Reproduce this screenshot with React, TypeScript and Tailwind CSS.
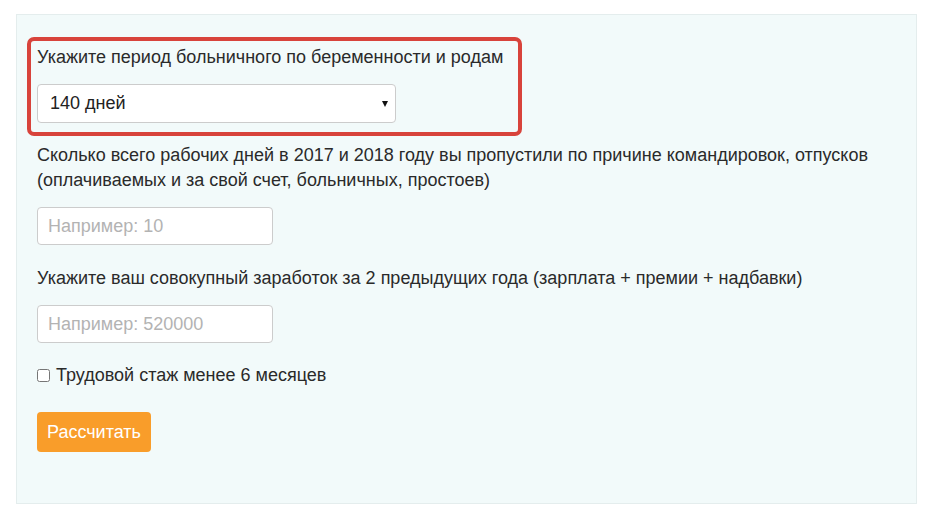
import { useState } from 'react'

export default function App() {
  const [period, setPeriod] = useState('140')
  const [days, setDays] = useState('')
  const [income, setIncome] = useState('')
  const [shortTenure, setShortTenure] = useState(false)

  return (
    <div className="min-h-[522px] bg-white pt-[14px] pl-[16px] font-['Liberation_Sans',Arial,sans-serif] text-[18px] text-[#2a2a2a]">
      <div className="w-[901px] h-[490px] border border-[#e4eded] bg-[#f2fafa] pt-[22px] px-[20px]">
        {/* highlighted block */}
        <div className="-ml-[10px] w-[495px] rounded-[7px] border-[4px] border-[#d8433b] pt-[5px] pb-[9px] px-[6px]">
          <div className="leading-[22px]">Укажите период больничного по беременности и родам</div>
          <div className="relative mt-[16px] w-[359px]">
            <select
              value={period}
              onChange={e => setPeriod(e.target.value)}
              className="block h-[39px] w-full appearance-none rounded-[4px] border border-[#ccc] bg-white pl-[12px] pr-[24px] text-[18px] text-[#222] outline-none"
            >
              <option value="140">140 дней</option>
              <option value="156">156 дней</option>
              <option value="194">194 дня</option>
            </select>
            <svg className="pointer-events-none absolute right-[8px] top-[17px]" width="6" height="6" viewBox="0 0 6 6">
              <path d="M0 0h6L3 6z" fill="#111" />
            </svg>
          </div>
        </div>

        <div className="mt-[7px] leading-[25px]">
          Сколько всего рабочих дней в 2017 и 2018 году вы пропустили по причине командировок, отпусков
          <br />
          (оплачиваемых и за свой счет, больничных, простоев)
        </div>
        <input
          value={days}
          onChange={e => setDays(e.target.value)}
          placeholder="Например: 10"
          className="mt-[14px] block h-[38px] w-[236px] rounded-[4px] border border-[#ccc] bg-white px-[10px] text-[18px] outline-none placeholder:text-[#b3b3b3]"
        />

        <div className="mt-[21px] leading-[25px]">
          Укажите ваш совокупный заработок за 2 предыдущих года (зарплата + премии + надбавки)
        </div>
        <input
          value={income}
          onChange={e => setIncome(e.target.value)}
          placeholder="Например: 520000"
          className="mt-[14px] block h-[38px] w-[236px] rounded-[4px] border border-[#ccc] bg-white px-[10px] text-[18px] outline-none placeholder:text-[#b3b3b3]"
        />

        <label className="mt-[20px] flex items-center gap-[6px] leading-[25px]">
          <input
            type="checkbox"
            checked={shortTenure}
            onChange={e => setShortTenure(e.target.checked)}
            className="m-0 h-[13px] w-[13px]"
          />
          Трудовой стаж менее 6 месяцев
        </label>

        <button className="mt-[24px] h-[40px] rounded-[4px] bg-[#f99d2a] px-[10px] text-[18px] text-white">
          Рассчитать
        </button>
      </div>
    </div>
  )
}
